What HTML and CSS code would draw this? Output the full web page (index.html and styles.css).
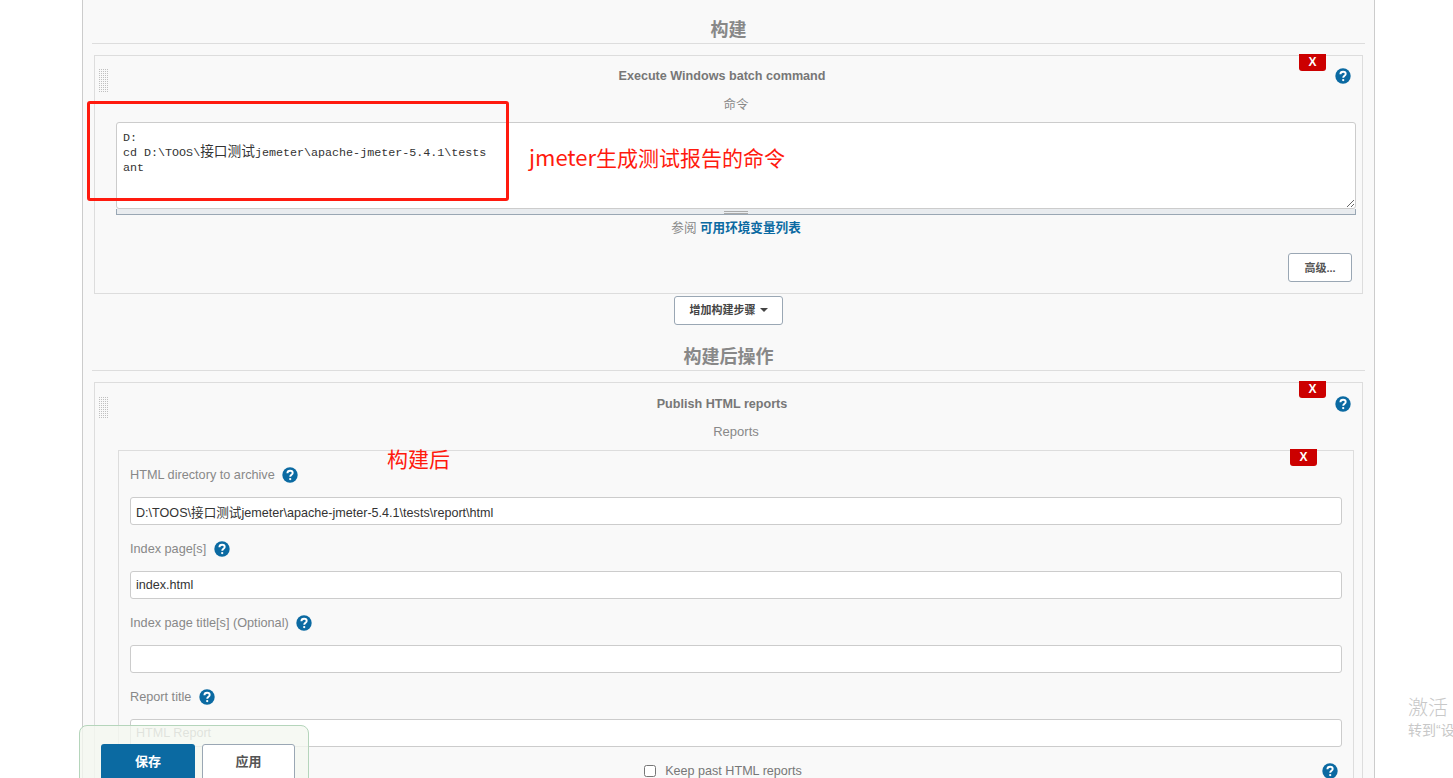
FILE: index.html
```html
<!DOCTYPE html>
<html lang="zh-CN">
<head>
<meta charset="utf-8">
<title>Jenkins 配置</title>
<link rel="stylesheet" href="styles.css">
</head>
<body>
<svg class="defs" width="0" height="0" aria-hidden="true">
  <symbol id="help" viewBox="0 0 16 16">
    <circle cx="8" cy="8" r="7.7" fill="#0b6aa2"/>
    <path d="M5.4 6.2c0-1.6 1.2-2.5 2.7-2.5s2.6.9 2.6 2.2c0 1.9-2.5 1.9-2.5 3.9" fill="none" stroke="#fff" stroke-width="1.9"/>
    <circle cx="8.2" cy="12.1" r="1.15" fill="#fff"/>
  </symbol>
</svg>
<main class="panel">
  <h2 class="section-head">构建</h2>
  <section class="block block-first">
    <span class="handle"></span>
    <button class="del" type="button">X</button>
    <div class="title-row">
      <div class="title">Execute Windows batch command</div>
      <svg class="help"><use href="#help"/></svg>
    </div>
    <div class="body">
      <div class="body-label">命令</div>
      <div class="editor"><div class="line">D:</div><div class="line">cd D:\TOOS\<span class="cjk">接口测试</span>jemeter\apache-jmeter-5.4.1\tests</div><div class="line">ant</div></div>
      <div class="grippie"><span class="grip"></span></div>
      <div class="env-note">参阅 <a class="env-link" href="#">可用环境变量列表</a></div>
      <div class="adv-row"><button class="btn btn-adv" type="button">高级...</button></div>
    </div>
  </section>
  <div class="add-row"><button class="btn btn-add" type="button">增加构建步骤<span class="caret"></span></button></div>
  <h2 class="section-head section-head-2">构建后操作</h2>
  <section class="block block-second">
    <span class="handle"></span>
    <button class="del" type="button">X</button>
    <div class="title-row">
      <div class="title">Publish HTML reports</div>
      <svg class="help"><use href="#help"/></svg>
    </div>
    <div class="body">
      <div class="body-label body-label-en">Reports</div>
      <div class="inner">
        <button class="del del-inner" type="button">X</button>
        <div class="field-label">HTML directory to archive <svg class="help"><use href="#help"/></svg></div>
        <input class="input" type="text" value="D:\TOOS\接口测试jemeter\apache-jmeter-5.4.1\tests\report\html">
        <div class="field-label">Index page[s] <svg class="help"><use href="#help"/></svg></div>
        <input class="input" type="text" value="index.html">
        <div class="field-label">Index page title[s] (Optional) <svg class="help"><use href="#help"/></svg></div>
        <input class="input" type="text" value="">
        <div class="field-label">Report title <svg class="help"><use href="#help"/></svg></div>
        <input class="input input-ghost" type="text" value="HTML Report">
        <div class="check-row">
          <label class="check-label"><input class="check" type="checkbox">Keep past HTML reports</label>
          <svg class="help"><use href="#help"/></svg>
        </div>
      </div>
    </div>
  </section>
</main>
<div class="red-box"></div>
<div class="note note-cmd"><span class="note-latin">jmeter</span>生成测试报告的命令</div>
<div class="note note-post">构建后</div>
<div class="save-bar">
  <button class="bar-btn bar-save" type="button">保存</button>
  <button class="bar-btn bar-apply" type="button">应用</button>
</div>
<div class="watermark">
  <div class="wm-big">激活</div>
  <div class="wm-small">转到<span class="wm-quote">“</span>设</div>
</div>
</body>
</html>
```

FILE: styles.css
```css
* { box-sizing: border-box; }
html, body { margin: 0; height: 778px; overflow: hidden; background: #fff; }
body {
  position: relative;
  font-family: "Liberation Sans", "Noto Sans CJK SC", sans-serif;
  font-size: 12.6px;
  color: #333;
}
.defs { position: absolute; }
.panel {
  margin-left: 82px;
  width: 1293px;
  height: 778px;
  padding: 0 9px 0 10px;
  background: #f9f9f9;
  border-left: 1px solid #ccc;
  border-right: 1px solid #ccc;
  overflow: hidden;
}
.section-head {
  margin: 0 0 0 -1px;
  padding: 17px 0 0;
  font-size: 18px;
  line-height: 26px;
  font-weight: 700;
  text-align: center;
  color: #888;
  border-bottom: 1px solid #ddd;
}
.section-head-2 { padding-top: 19px; }
.block {
  position: relative;
  margin: 11px 2px 0 1px;
  border: 1px solid #ddd;
}
.block-first { height: 239px; }
.handle {
  position: absolute;
  left: 4px;
  top: 12px;
  width: 10px;
  height: 24px;
  background-image:
    linear-gradient(#f9f9f9 50%, transparent 50%),
    linear-gradient(90deg, #c0c0c0 50%, #f9f9f9 50%);
  background-size: 2px 2px;
}
.block-second .handle { top: 13px; height: 22px; }
.del {
  position: absolute;
  top: -2px;
  right: 36px;
  width: 27px;
  height: 17px;
  padding: 0;
  border: 0;
  border-radius: 0 0 3px 3px;
  background: #c00;
  color: #fff;
  font: 700 12px/17px "Liberation Sans", sans-serif;
  text-align: center;
}
.title-row {
  display: flex;
  align-items: center;
  padding: 10px 11px 0 14px;
  height: 29px;
}
.block-second .title-row { padding-top: 11px; height: 30px; }
.title {
  flex: 1;
  text-align: center;
  font-weight: 700;
  font-size: 12.6px;
  line-height: 18px;
  color: #777;
}
.help {
  width: 16px;
  height: 16px;
  flex: none;
  vertical-align: -3px;
}
.body { padding: 10px 6px 0 21px; }
.body-label {
  margin-top: 1px;
  text-align: center;
  line-height: 18px;
  color: #888;
  font-size: 12.5px;
}
.body-label-en { font-size: 13px; margin-top: 0; }
.editor {
  margin-top: 8px;
  height: 87px;
  padding: 8px 6px 6px;
  background: #fff;
  border: 1px solid #ccc;
  border-radius: 3px;
  overflow: auto;
  resize: vertical;
  font-family: "Liberation Mono", "Noto Sans CJK SC", monospace;
  font-size: 11.7px;
  line-height: 15px;
  color: #333;
}
.line { white-space: pre; }
.cjk { font-family: "Noto Sans CJK SC", sans-serif; font-size: 13.7px; line-height: 0; }
.grippie {
  display: flex;
  justify-content: center;
  height: 6px;
  background: #e9ecef;
  border-bottom: 1px solid #9aa7b4;
  border-left: 1px solid #9aa7b4;
  border-right: 1px solid #9aa7b4;
  padding-top: 2px;
}
.grip {
  width: 24px;
  height: 3px;
  border-top: 1px solid #aaa;
  border-bottom: 1px solid #aaa;
}
.env-note {
  margin-top: 4px;
  text-align: center;
  font-size: 12.6px;
  line-height: 18px;
  color: #888;
}
.env-link { color: #0b6aa2; font-weight: 700; text-decoration: none; }
.adv-row {
  display: flex;
  justify-content: flex-end;
  margin-top: 16px;
  padding-right: 4px;
}
.btn {
  height: 29px;
  padding: 0;
  background: #fff;
  border: 1px solid #9aa7b4;
  border-radius: 3px;
  font: 700 11px/27px "Liberation Sans", "Noto Sans CJK SC", sans-serif;
  color: #555;
}
.btn-adv { width: 64px; padding-top: 1px; }
.btn-add { width: 109px; color: #444; }
.caret {
  display: inline-block;
  margin-left: 4px;
  vertical-align: 2px;
  border: 4px solid transparent;
  border-top-color: #444;
  border-bottom: 0;
}
.add-row { display: flex; justify-content: center; margin: 2px 0 0 -1px; }
.inner {
  position: relative;
  margin: 9px 2px 0 2px;
  padding: 0 11px 30px;
  border: 1px solid #ddd;
}
.field-label {
  padding-top: 15px;
  height: 46px;
  font-size: 12.7px;
  line-height: 18px;
  color: #888;
}
.field-label .help { margin-left: 4px; vertical-align: -4px; }
.input {
  display: block;
  width: 100%;
  height: 28px;
  padding: 0 5px;
  background: #fff;
  border: 1px solid #ccc;
  border-radius: 3px;
  font: 12.6px "Liberation Sans", "Noto Sans CJK SC", sans-serif;
  color: #333;
}
.input-ghost { color: #999; }
.check-row {
  display: flex;
  align-items: center;
  margin-top: 16px;
  padding-right: 4px;
}
.check-label {
  flex: 1;
  margin-right: 6px;
  text-align: center;
  font-size: 12.6px;
  color: #777;
}
.check { width: 12px; height: 12px; margin: 0 9px 0 0; vertical-align: -2px; }
.red-box {
  position: absolute;
  left: 87px;
  top: 101px;
  width: 422px;
  height: 100px;
  border: 3px solid #ff1a0e;
  border-radius: 3px;
}
.note {
  position: absolute;
  color: #ff1a0e;
  font-family: "Noto Sans CJK SC", sans-serif;
  font-size: 21px;
  line-height: 28px;
  font-weight: 400;
  white-space: nowrap;
}
.note-latin { font-size: 22px; }
.note-cmd { left: 529px; top: 142px; }
.note-post { left: 387px; top: 444px; }
.save-bar {
  position: absolute;
  left: 79px;
  top: 725px;
  width: 230px;
  height: 70px;
  display: flex;
  gap: 7px;
  padding: 18px 0 0 21px;
  background: rgba(243, 247, 240, 0.78);
  border: 1px solid #b5d5bb;
  border-radius: 8px 8px 0 0;
}
.bar-btn {
  height: 50px;
  padding: 0 0 18px;
  border-radius: 3px;
  font: 700 13px "Noto Sans CJK SC", sans-serif;
}
.bar-save { width: 94px; background: #0b6aa2; border: 0; color: #fff; }
.bar-apply { width: 93px; background: #fff; border: 1px solid #9aa7b4; color: #555; }
.watermark {
  position: absolute;
  left: 1408px;
  top: 693px;
  width: 45px;
  overflow: hidden;
  white-space: nowrap;
  font-family: "Noto Sans CJK SC", sans-serif;
  color: #c8c8c8;
}
.wm-big { font-size: 20px; line-height: 27px; font-weight: 300; }
.wm-small { font-size: 14px; line-height: 18px; }
.wm-quote { font-family: "Liberation Sans", sans-serif; }
```
